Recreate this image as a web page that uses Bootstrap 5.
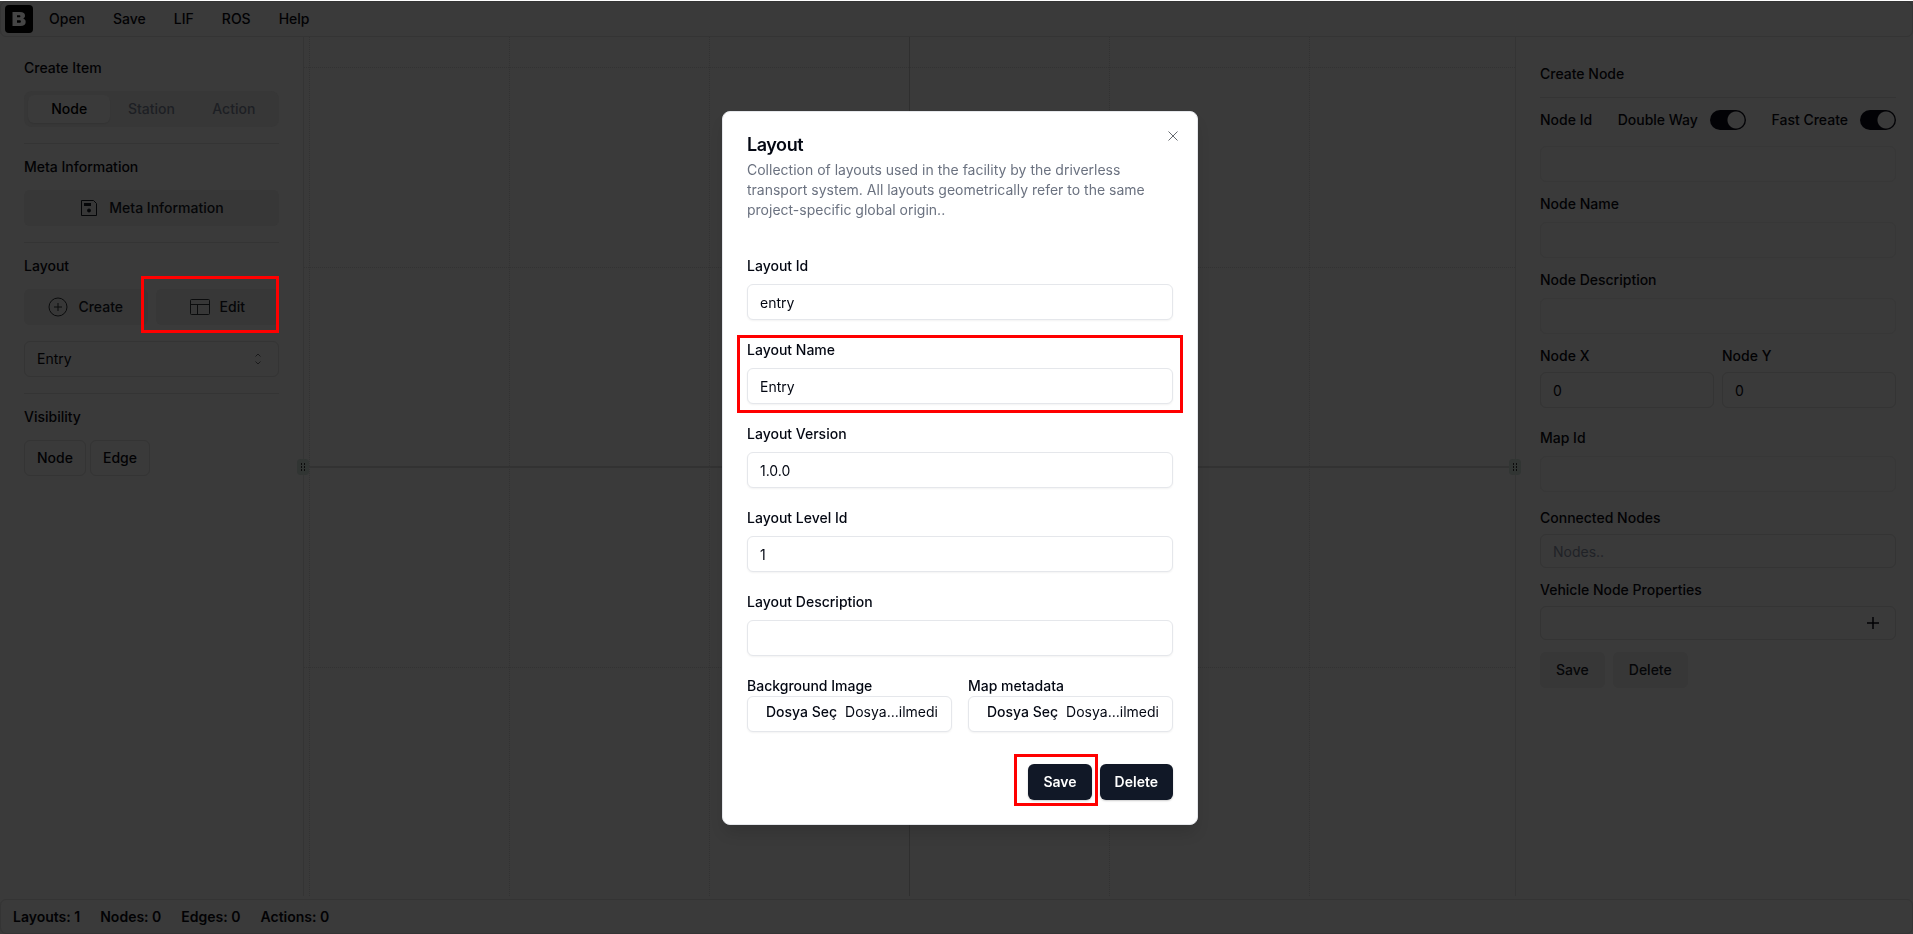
<!DOCTYPE html>
<html lang="en">
<head>
<meta charset="utf-8">
<meta name="viewport" content="width=device-width, initial-scale=1">
<title>Layout editor</title>
<link href="https://cdn.jsdelivr.net/npm/bootstrap@5.3.0/dist/css/bootstrap.min.css" rel="stylesheet">
<style>
  :root { --surface:#3a3a3a; --line:#343434; --ink:#020204; --soft:#373737; --navy:#111827; }
  html, body { height:100%; }
  body { font-family:Inter, sans-serif; font-size:14px; line-height:20px; font-weight:500; color:var(--ink); background:var(--surface); border-top:1px solid #fff; overflow:hidden; }
  .btn { --bs-btn-font-size:14px; --bs-btn-line-height:20px; --bs-btn-font-weight:500; --bs-btn-border-radius:6px; height:36px; }
  .section-title { font-size:14px; line-height:14px; font-weight:500; margin:16px 0; }
  .menubar { height:36px; border:1px solid var(--line); border-radius:6px; padding:0 4px; }
  .menubar a { color:inherit; text-decoration:none; padding:4px 14px; }
  .brand { width:28px; height:28px; border-radius:4px; background:#000; margin-right:2px; }
  .rule { height:1px; background:var(--line); }

  .sidebar { width:304px; padding:8px 24px 0; border-right:1px solid var(--line); }
  .tabset { background:var(--soft); border-radius:8px; padding:4px; height:36px; }
  .tabset .btn, .tabset .btn:hover { height:28px; padding:4px 0; border:0; color:#1d1f24; }
  .tabset .btn.active { background:var(--surface); color:#000; box-shadow:0 1px 1px #0001; }
  .btn-soft, .btn-soft:hover { background:var(--soft); color:#050608; border:0; padding:8px 16px; }
  .btn-line, .btn-line:hover { border:1px solid var(--line); color:var(--ink); padding:7px 12px; }
  .btn-icon { display:flex; align-items:center; justify-content:center; gap:10px; }

  .field, .field:focus { display:block; width:100%; height:36px; border:1px solid var(--line); border-radius:6px; background:transparent; padding:4px 12px; font-size:14px; line-height:20px; font-weight:400; color:var(--ink); }
  .field.faint { border-color:#373737; }
  .field.compact { height:34px; }
  .field::placeholder { color:#202227; opacity:1; }
  select.field { appearance:none; }
  .picker-mark { position:absolute; right:16px; top:12px; pointer-events:none; }
  .caption { display:block; font-size:14px; line-height:16px; font-weight:500; margin:0 0 10px; }
  .caption.snug { margin-bottom:8px; }
  .caption.tight { margin-bottom:2px; }

  .inspector { width:398px; padding:14px 17px 0 24px; border-left:1px solid var(--line); }
  .entry-group { margin-top:14px; }
  .entry-group.spaced { margin-top:22px; }
  .switch-group { display:flex; align-items:center; gap:12px; }
  .switch-group .toggle { appearance:none; width:36px; height:20px; margin:0; border-radius:10px; background:radial-gradient(circle at 26px 10px, var(--surface) 8px, #020205 9px); }
  .add-button { position:absolute; right:16px; top:10px; width:14px; height:14px; padding:0; border:0; background:none; display:flex; }

  .plane { min-width:0; }
  .plane > svg { position:absolute; inset:0; width:100%; height:100%; }
  .grip { position:absolute; top:50%; transform:translateY(-50%); width:12px; height:16px; border-radius:4px; background:#313533; display:flex; align-items:center; justify-content:center; z-index:1; }
  .grip.start { left:-7px; }
  .grip.end { right:-6px; }
  .statusbar { height:35px; border:1px solid var(--line); border-radius:6px; padding:0 12px; gap:20px; font-weight:600; margin-top:3px; }

  .shade { position:fixed; inset:0; z-index:10; padding:2px 0 0 7px; }
  .dialog-box { width:476px; background:#fff; color:#030712; border:1px solid #e5e7eb; border-radius:8px; padding:24px; box-shadow:0 10px 15px -3px #0002; position:relative; }
  .dialog-box h1 { font-size:18px; line-height:18px; font-weight:600; letter-spacing:-0.025em; margin:0 0 6px; }
  .dialog-box p { color:#6b7280; font-weight:400; margin:0 0 38px; padding-right:16px; }
  .dialog-box .field { border-color:#e5e7eb; color:#030712; background:#fff; box-shadow:0 1px 2px #0000000d; }
  .dialog-close { position:absolute; right:16px; top:16px; width:16px; height:16px; padding:0; border:0; background:none; display:flex; }
  .form-stack { display:flex; flex-direction:column; gap:22px; }
  .dialog-box .upload { display:flex; gap:8px; padding:5px 0 5px 18px; position:relative; white-space:nowrap; }
  .upload b { font-weight:500; }
  .upload input { position:absolute; inset:0; width:100%; opacity:0; }
  .dialog-actions { margin-top:32px; }
  .btn-navy, .btn-navy:hover { background:var(--navy); color:#fff; border:0; padding:8px 15px; box-shadow:0 1px 2px #0003; font-weight:600; }

  .marked { position:relative; }
  .marked::after { content:""; position:absolute; border:3px solid #f00; pointer-events:none; z-index:2; }
  .mark-edit::after { inset:-13px 0 -8px -15px; }
  .mark-name::after { inset:-7px -10px -9px; }
  .mark-save::after { inset:-10px -6px -6px -14px; }
</style>
</head>
<body class="d-flex flex-column">
<nav class="menubar d-flex align-items-center flex-shrink-0">
  <span class="brand d-flex align-items-center justify-content-center"><svg width="16" height="16" viewBox="0 0 16 16" fill="#454545" fill-rule="evenodd"><path d="M1.500 1H9c3.500 0 5 1.300 5 3.700 0 1.500-.8 2.500-2 2.900 1.600.4 2.700 1.500 2.700 3.300C14.700 13.600 12.800 15 9.500 15h-8zM6 4.200v2.100h2.100c.9 0 1.300-.4 1.300-1.100S9 4.200 8.100 4.200zM6 9.200v2.500h2.400c1 0 1.500-.5 1.500-1.300s-.5-1.200-1.500-1.200z"/></svg></span>
  <a href="#">Open</a><a href="#">Save</a><a href="#">LIF</a><a href="#">ROS</a><a href="#">Help</a>
</nav>

<div class="d-flex flex-grow-1">
  <aside class="sidebar flex-shrink-0">
    <h2 class="section-title">Create Item</h2>
    <div class="tabset d-flex mb-3"><button class="btn active w-100">Node</button><button class="btn w-100">Station</button><button class="btn w-100">Action</button></div>
    <div class="rule"></div>
    <h2 class="section-title">Meta Information</h2>
    <button class="btn btn-soft btn-icon w-100 mb-3"><svg width="20" height="20" viewBox="0 0 20 20" fill="none" stroke="#050608"><path d="M2.500 2.500h12l3 3v12h-15z"/><path d="M5 6.500h7" stroke-width="3"/><circle cx="10" cy="12.500" r="1.500" fill="#050608"/></svg>Meta Information</button>
    <div class="rule"></div>
    <h2 class="section-title">Layout</h2>
    <div class="d-flex gap-2 mb-3">
      <div class="w-50"><button class="btn btn-soft btn-icon w-100"><svg width="20" height="20" viewBox="0 0 20 20" fill="none" stroke="#0b0c0d"><circle cx="10" cy="10" r="9"/><path d="M10 6v8M6 10h8"/></svg>Create</button></div>
      <div class="marked mark-edit w-50"><button class="btn btn-soft btn-icon w-100"><svg width="20" height="20" viewBox="0 0 20 20" fill="none" stroke="#0b0c0d"><rect x=".5" y="2.500" width="19" height="15" rx="1"/><path d="M.5 7.500h19M7.500 7.500v10"/></svg>Edit</button></div>
    </div>
    <div class="position-relative mb-3">
      <select class="field" aria-label="Layout"><option>Entry</option></select>
      <svg class="picker-mark" width="10" height="12" viewBox="0 0 10 12" fill="none" stroke="#1a1a1b"><path d="M2.500 3.500 5 1l2.500 2.500M2.500 8.500 5 11l2.500-2.500"/></svg>
    </div>
    <div class="rule"></div>
    <h2 class="section-title">Visibility</h2>
    <div class="d-flex gap-1"><button class="btn btn-line">Node</button><button class="btn btn-line">Edge</button></div>
  </aside>

  <main class="plane flex-grow-1 position-relative">
    <svg aria-hidden="true">
      <g stroke="#323232" stroke-dasharray="1 1">
        <path d="M0 30.500H1211M0 230.500H1211M0 630.500H1211"/>
        <path d="M5.500 0V860M205.500 0V860M405.500 0V860M805.500 0V860M1005.500 0V860"/>
      </g>
      <path d="M605.500 0V860" stroke="#2f2f2f"/>
      <path d="M5 430H1205" stroke="#323232" stroke-width="2"/>
    </svg>
    <span class="grip start"><svg width="6" height="8" fill="#0c0c0c"><path d="M1 0h1v2H1zM4 0h1v2H4zM1 3h1v2H1zM4 3h1v2H4zM1 6h1v2H1zM4 6h1v2H4z"/></svg></span>
    <span class="grip end"><svg width="6" height="8" fill="#0c0c0c"><path d="M1 0h1v2H1zM4 0h1v2H4zM1 3h1v2H1zM4 3h1v2H4zM1 6h1v2H1zM4 6h1v2H4z"/></svg></span>
  </main>

  <aside class="inspector flex-shrink-0">
    <h2 class="section-title">Create Node</h2>
    <div class="rule"></div>
    <div class="d-flex justify-content-between align-items-center pt-1 mt-2 mb-3">
      <label for="nodeId">Node Id</label>
      <span class="switch-group"><label for="doubleWay">Double Way</label><input class="toggle" type="checkbox" role="switch" id="doubleWay" checked></span>
      <span class="switch-group"><label for="fastCreate">Fast Create</label><input class="toggle" type="checkbox" role="switch" id="fastCreate" checked></span>
    </div>
    <input class="field faint" id="nodeId" type="text">
    <div class="entry-group"><label class="caption" for="nodeName">Node Name</label><input class="field faint" id="nodeName" type="text"></div>
    <div class="entry-group"><label class="caption" for="nodeDesc">Node Description</label><input class="field faint" id="nodeDesc" type="text"></div>
    <div class="entry-group d-flex gap-2">
      <div class="w-50"><label class="caption snug" for="nodeX">Node X</label><input class="field" id="nodeX" type="text" value="0"></div>
      <div class="w-50"><label class="caption snug" for="nodeY">Node Y</label><input class="field" id="nodeY" type="text" value="0"></div>
    </div>
    <div class="entry-group spaced"><label class="caption" for="mapId">Map Id</label><input class="field faint" id="mapId" type="text"></div>
    <div class="entry-group pt-1"><label class="caption snug" for="connected">Connected Nodes</label><input class="field compact" id="connected" type="text" placeholder="Nodes.."></div>
    <div class="entry-group"><label class="caption snug" for="vehicleProps">Vehicle Node Properties</label>
      <div class="position-relative"><input class="field compact" id="vehicleProps" type="text"><button class="add-button" aria-label="Add property"><svg width="14" height="14" viewBox="0 0 14 14" stroke="#020204" stroke-width="1.500"><path d="M7 1v12M1 7h12"/></svg></button></div>
    </div>
    <div class="d-flex gap-2 mt-2 pt-1"><button class="btn btn-soft">Save</button><button class="btn btn-soft">Delete</button></div>
  </aside>
</div>

<footer class="statusbar d-flex align-items-center flex-shrink-0"><span>Layouts: 1</span><span>Nodes: 0</span><span>Edges: 0</span><span>Actions: 0</span></footer>

<div class="shade d-flex align-items-center justify-content-center">
  <form class="dialog-box" role="dialog" aria-labelledby="dialogTitle">
    <button type="button" class="dialog-close" aria-label="Close"><svg width="16" height="16" viewBox="0 0 16 16" stroke="#666a70"><path d="m3.500 3.500 9 9M12.500 3.500l-9 9"/></svg></button>
    <h1 id="dialogTitle">Layout</h1>
    <p>Collection of layouts used in the facility by the driverless transport system. All layouts geometrically refer to the same project-specific global origin..</p>
    <div class="form-stack">
      <div><label class="caption" for="layoutId">Layout Id</label><input class="field" id="layoutId" type="text" value="entry"></div>
      <div class="marked mark-name"><label class="caption" for="layoutName">Layout Name</label><input class="field" id="layoutName" type="text" value="Entry"></div>
      <div><label class="caption" for="layoutVersion">Layout Version</label><input class="field" id="layoutVersion" type="text" value="1.0.0"></div>
      <div><label class="caption" for="layoutLevel">Layout Level Id</label><input class="field" id="layoutLevel" type="text" value="1"></div>
      <div><label class="caption" for="layoutDesc">Layout Description</label><input class="field" id="layoutDesc" type="text"></div>
      <div class="row gx-3">
        <div class="col-6"><label class="caption tight" for="bgImage">Background Image</label><div class="field upload"><b>Dosya Seç</b><span>Dosya...ilmedi</span><input type="file" id="bgImage"></div></div>
        <div class="col-6"><label class="caption tight" for="mapMeta">Map metadata</label><div class="field upload"><b>Dosya Seç</b><span>Dosya...ilmedi</span><input type="file" id="mapMeta"></div></div>
      </div>
    </div>
    <div class="dialog-actions d-flex justify-content-end gap-2">
      <div class="marked mark-save"><button type="button" class="btn btn-navy">Save</button></div>
      <button type="button" class="btn btn-navy">Delete</button>
    </div>
  </form>
</div>
<script src="https://cdn.jsdelivr.net/npm/bootstrap@5.3.0/dist/js/bootstrap.bundle.min.js"></script>
</body>
</html>
